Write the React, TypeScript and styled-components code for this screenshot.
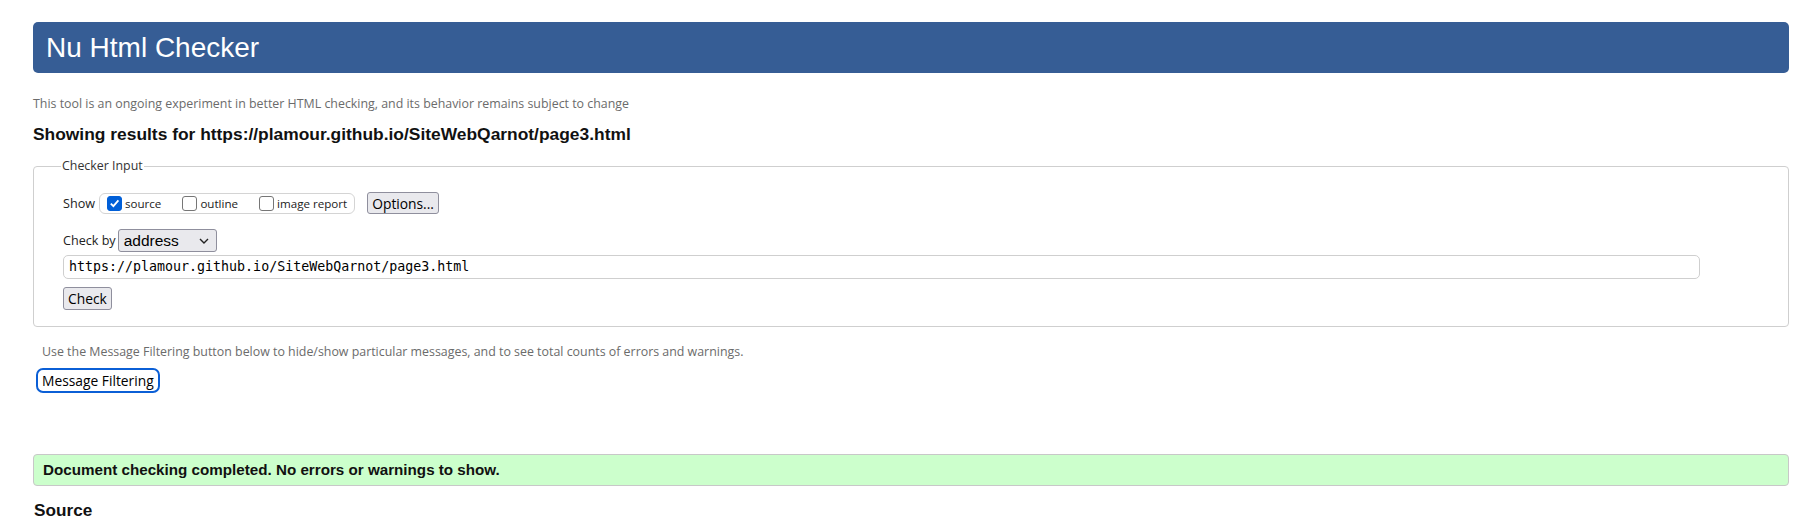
import React from 'react';
import styled, { createGlobalStyle } from 'styled-components';

const GlobalStyle = createGlobalStyle`
  html, body {
    margin: 0;
    padding: 0;
    background: #fff;
  }
`;

const uiFont = `"Open Sans", "Noto Sans", sans-serif`;
const arialFont = `"Liberation Sans", Arial, sans-serif`;

const SPage = styled.div`
  padding: 22px 25px 0 33px;
  font-family: ${arialFont};
  color: #000;
`;
const SHeader = styled.h1`
  margin: 0;
  height: 51px;
  line-height: 51px;
  padding: 0 13px;
  background: #365d95;
  border-radius: 5px;
  color: #fff;
  font-weight: 400;
  font-size: 28px;
`;
const SNote = styled.p<{ indent?: number; top: number }>`
  margin: ${({ top }) => top}px 0 0 ${({ indent }) => indent || 0}px;
  font-family: ${uiFont};
  font-size: 12.4px;
  line-height: 16px;
  color: #6b6b6b;
`;
const SResultsTitle = styled.h2`
  margin: 13px 0 0;
  font-size: 17.4px;
  line-height: 18px;
  font-weight: 700;
  color: #111;
`;
const SFieldset = styled.fieldset`
  margin: 15px 0 0;
  padding: 0 29px 16px;
  border: 1px solid #cfcfcf;
  border-radius: 4px;
`;
const SLegend = styled.legend`
  margin-left: -2px;
  padding: 0 1px;
  font-family: ${uiFont};
  font-size: 12.4px;
  line-height: 16px;
  color: #333;
`;
const SRow = styled.div<{ top: number }>`
  display: flex;
  align-items: center;
  margin-top: ${({ top }) => top}px;
`;
const SLabel = styled.span`
  font-family: ${uiFont};
  font-size: 12.6px;
  color: #222;
`;
const SCheckGroup = styled.div`
  display: flex;
  align-items: center;
  gap: 21px;
  height: 19px;
  margin-left: 4px;
  padding: 0 7px;
  border: 1px solid #d4d4d4;
  border-radius: 6px;
`;
const SCheckItem = styled.label`
  display: flex;
  align-items: center;
  gap: 3px;
  font-family: ${uiFont};
  font-size: 11.6px;
  color: #222;
`;
const SBox = styled.span<{ checked?: boolean }>`
  display: inline-flex;
  align-items: center;
  justify-content: center;
  box-sizing: border-box;
  width: 15px;
  height: 15px;
  border-radius: 3px;
  border: 1px solid ${({ checked }) => (checked ? '#005fd8' : '#767676')};
  background: ${({ checked }) => (checked ? '#005fd8' : '#fff')};
`;
const SButton = styled.button<{ focused?: boolean }>`
  box-sizing: border-box;
  height: ${({ focused }) => (focused ? 25 : 22)}px;
  padding: 0 4px;
  font-family: ${uiFont};
  font-size: 13.8px;
  color: #000;
  background: ${({ focused }) => (focused ? '#fff' : '#e9e9ed')};
  border: ${({ focused }) =>
    focused ? '2px solid #0b5fd6' : '1px solid #8f8f9d'};
  border-radius: ${({ focused }) => (focused ? 7 : 3)}px;
`;
const SOptions = styled(SButton)`
  margin-left: 12px;
`;
const SSelect = styled.div`
  display: flex;
  align-items: center;
  justify-content: space-between;
  box-sizing: border-box;
  width: 99px;
  height: 23px;
  margin-left: 2px;
  padding: 0 7px 0 5px;
  background: #e9e9ed;
  border: 1px solid #8f8f9d;
  border-radius: 3px;
  font-family: ${arialFont};
  font-size: 15.5px;
  color: #000;
`;
const SInput = styled.div`
  box-sizing: border-box;
  height: 24px;
  margin: 3px 59px 0 0;
  padding: 0 5px;
  border: 1px solid #cfcfcf;
  border-radius: 5px;
  font-family: "DejaVu Sans Mono", "Liberation Mono", monospace;
  font-size: 13.3px;
  line-height: 22px;
  color: #000;
`;
const SCheckButton = styled(SButton)`
  display: block;
  height: 23px;
  margin-top: 8px;
`;
const SFilterButton = styled(SButton)`
  display: block;
  margin: 8px 0 0 3px;
`;
const SSuccess = styled.div`
  margin-top: 61px;
  height: 32px;
  box-sizing: border-box;
  padding: 0 9px;
  border: 1px solid #c8c8c8;
  border-radius: 4px;
  background: #ccffcc;
  font-size: 15.2px;
  font-weight: 700;
  line-height: 30px;
  color: #111;
`;
const SSourceTitle = styled.h2`
  margin: 15px 0 0 1px;
  font-size: 17.2px;
  line-height: 18px;
  font-weight: 700;
  color: #111;
`;

const Tick = () => (
  <svg width="11" height="11" viewBox="0 0 11 11">
    <path d="M1.8 5.6 L4.4 8.2 L9.4 2.4" fill="none" stroke="#fff" strokeWidth="1.8" />
  </svg>
);

const Chevron = () => (
  <svg width="10" height="6" viewBox="0 0 10 6">
    <path d="M1 1 L5 5 L9 1" fill="none" stroke="#222" strokeWidth="1.4" />
  </svg>
);

const showOptions = [
  { name: 'source', checked: true },
  { name: 'outline', checked: false },
  { name: 'image report', checked: false },
];

export default function App() {
  const url = 'https://plamour.github.io/SiteWebQarnot/page3.html';
  return (
    <SPage>
      <GlobalStyle />
      <SHeader>Nu Html Checker</SHeader>
      <SNote top={23}>
        This tool is an ongoing experiment in better HTML checking, and its behavior remains subject to change
      </SNote>
      <SResultsTitle>Showing results for {url}</SResultsTitle>
      <SFieldset>
        <SLegend>Checker Input</SLegend>
        <SRow top={18}>
          <SLabel>Show</SLabel>
          <SCheckGroup>
            {showOptions.map((o) => (
              <SCheckItem key={o.name}>
                <SBox checked={o.checked}>{o.checked && <Tick />}</SBox>
                {o.name}
              </SCheckItem>
            ))}
          </SCheckGroup>
          <SOptions>Options...</SOptions>
        </SRow>
        <SRow top={15}>
          <SLabel>Check by</SLabel>
          <SSelect>
            address
            <Chevron />
          </SSelect>
        </SRow>
        <SInput>{url}</SInput>
        <SCheckButton>Check</SCheckButton>
      </SFieldset>
      <SNote top={17} indent={9}>
        Use the Message Filtering button below to hide/show particular messages, and to see total counts of errors and warnings.
      </SNote>
      <SFilterButton focused>Message Filtering</SFilterButton>
      <SSuccess>Document checking completed. No errors or warnings to show.</SSuccess>
      <SSourceTitle>Source</SSourceTitle>
    </SPage>
  );
}
